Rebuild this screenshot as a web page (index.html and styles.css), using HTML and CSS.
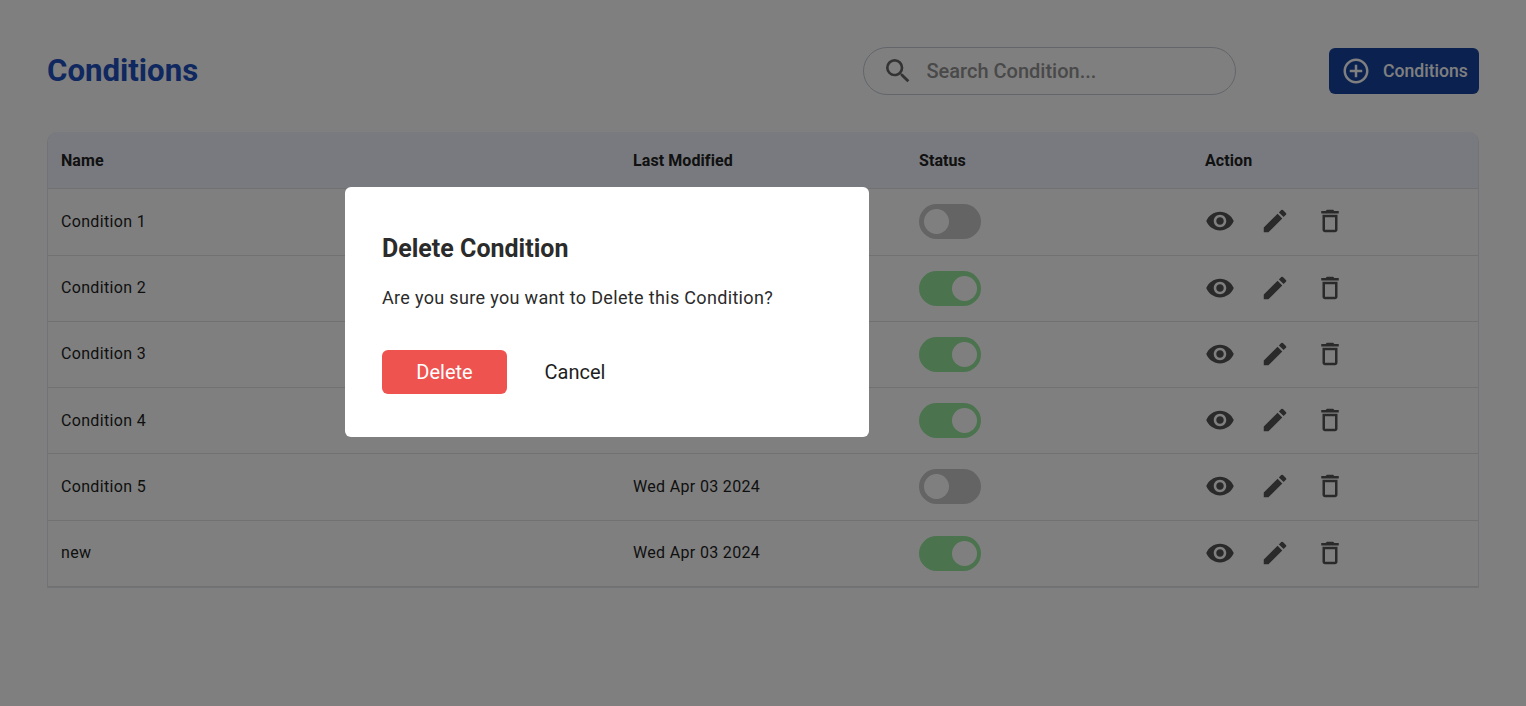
FILE: index.html
```html
<!DOCTYPE html>
<html lang="en">
<head>
<meta charset="utf-8">
<title>Conditions</title>
<link rel="stylesheet" href="styles.css">
</head>
<body>
<main class="page">
  <header class="topbar">
    <h1 class="title">Conditions</h1>
    <div class="tools">
      <label class="search">
        <svg class="search-icon" viewBox="0 0 24 24"><path d="M15.5 14h-.79l-.28-.27A6.471 6.471 0 0 0 16 9.5 6.5 6.5 0 1 0 9.5 16c1.61 0 3.09-.59 4.23-1.57l.27.28v.79l5 4.99L20.49 19l-4.99-5zm-6 0C7.01 14 5 11.99 5 9.5S7.01 5 9.5 5 14 7.01 14 9.5 11.99 14 9.5 14z"/></svg>
        <span class="search-text">Search Condition...</span>
      </label>
      <button class="add-btn" type="button">
        <svg class="add-icon" viewBox="0 0 24 24"><path d="M13 7h-2v4H7v2h4v4h2v-4h4v-2h-4V7zm-1-5C6.48 2 2 6.48 2 12s4.48 10 10 10 10-4.48 10-10S17.52 2 12 2zm0 18c-4.41 0-8-3.59-8-8s3.59-8 8-8 8 3.59 8 8-3.59 8-8 8z"/></svg>
        <span>Conditions</span>
      </button>
    </div>
  </header>

  <section class="table">
    <div class="row head"><div>Name</div><div>Last Modified</div><div>Status</div><div>Action</div></div>

    <div class="row"><div>Condition 1</div><div>Wed Apr 03 2024</div><div><span class="toggle"></span></div><div class="actions"><svg class="ic" viewBox="0 0 24 24"><path d="M12 4.5C7 4.5 2.73 7.61 1 12c1.73 4.39 6 7.5 11 7.5s9.27-3.11 11-7.5c-1.73-4.39-6-7.5-11-7.5zM12 17c-2.76 0-5-2.24-5-5s2.24-5 5-5 5 2.24 5 5-2.24 5-5 5zm0-8c-1.66 0-3 1.34-3 3s1.34 3 3 3 3-1.34 3-3-1.34-3-3-3z"/></svg><svg class="ic" viewBox="0 0 24 24"><path d="M3 17.25V21h3.75L17.81 9.94l-3.75-3.75L3 17.25zM20.71 7.04a.996.996 0 0 0 0-1.41l-2.34-2.34a.996.996 0 0 0-1.41 0l-1.83 1.83 3.75 3.75 1.83-1.83z"/></svg><svg class="ic" viewBox="0 0 24 24"><path d="M6 19c0 1.1.9 2 2 2h8c1.1 0 2-.9 2-2V7H6v12zM8 9h8v10H8V9zm7.5-5l-1-1h-5l-1 1H5v2h14V4h-3.5z"/></svg></div></div>

    <div class="row"><div>Condition 2</div><div>Wed Apr 03 2024</div><div><span class="toggle on"></span></div><div class="actions"><svg class="ic" viewBox="0 0 24 24"><path d="M12 4.5C7 4.5 2.73 7.61 1 12c1.73 4.39 6 7.5 11 7.5s9.27-3.11 11-7.5c-1.73-4.39-6-7.5-11-7.5zM12 17c-2.76 0-5-2.24-5-5s2.24-5 5-5 5 2.24 5 5-2.24 5-5 5zm0-8c-1.66 0-3 1.34-3 3s1.34 3 3 3 3-1.34 3-3-1.34-3-3-3z"/></svg><svg class="ic" viewBox="0 0 24 24"><path d="M3 17.25V21h3.75L17.81 9.94l-3.75-3.75L3 17.25zM20.71 7.04a.996.996 0 0 0 0-1.41l-2.34-2.34a.996.996 0 0 0-1.41 0l-1.83 1.83 3.75 3.75 1.83-1.83z"/></svg><svg class="ic" viewBox="0 0 24 24"><path d="M6 19c0 1.1.9 2 2 2h8c1.1 0 2-.9 2-2V7H6v12zM8 9h8v10H8V9zm7.5-5l-1-1h-5l-1 1H5v2h14V4h-3.5z"/></svg></div></div>

    <div class="row"><div>Condition 3</div><div>Wed Apr 03 2024</div><div><span class="toggle on"></span></div><div class="actions"><svg class="ic" viewBox="0 0 24 24"><path d="M12 4.5C7 4.5 2.73 7.61 1 12c1.73 4.39 6 7.5 11 7.5s9.27-3.11 11-7.5c-1.73-4.39-6-7.5-11-7.5zM12 17c-2.76 0-5-2.24-5-5s2.24-5 5-5 5 2.24 5 5-2.24 5-5 5zm0-8c-1.66 0-3 1.34-3 3s1.34 3 3 3 3-1.34 3-3-1.34-3-3-3z"/></svg><svg class="ic" viewBox="0 0 24 24"><path d="M3 17.25V21h3.75L17.81 9.94l-3.75-3.75L3 17.25zM20.71 7.04a.996.996 0 0 0 0-1.41l-2.34-2.34a.996.996 0 0 0-1.41 0l-1.83 1.83 3.75 3.75 1.83-1.83z"/></svg><svg class="ic" viewBox="0 0 24 24"><path d="M6 19c0 1.1.9 2 2 2h8c1.1 0 2-.9 2-2V7H6v12zM8 9h8v10H8V9zm7.5-5l-1-1h-5l-1 1H5v2h14V4h-3.5z"/></svg></div></div>

    <div class="row"><div>Condition 4</div><div>Wed Apr 03 2024</div><div><span class="toggle on"></span></div><div class="actions"><svg class="ic" viewBox="0 0 24 24"><path d="M12 4.5C7 4.5 2.73 7.61 1 12c1.73 4.39 6 7.5 11 7.5s9.27-3.11 11-7.5c-1.73-4.39-6-7.5-11-7.5zM12 17c-2.76 0-5-2.24-5-5s2.24-5 5-5 5 2.24 5 5-2.24 5-5 5zm0-8c-1.66 0-3 1.34-3 3s1.34 3 3 3 3-1.34 3-3-1.34-3-3-3z"/></svg><svg class="ic" viewBox="0 0 24 24"><path d="M3 17.25V21h3.75L17.81 9.94l-3.75-3.75L3 17.25zM20.71 7.04a.996.996 0 0 0 0-1.41l-2.34-2.34a.996.996 0 0 0-1.41 0l-1.83 1.83 3.75 3.75 1.83-1.83z"/></svg><svg class="ic" viewBox="0 0 24 24"><path d="M6 19c0 1.1.9 2 2 2h8c1.1 0 2-.9 2-2V7H6v12zM8 9h8v10H8V9zm7.5-5l-1-1h-5l-1 1H5v2h14V4h-3.5z"/></svg></div></div>

    <div class="row"><div>Condition 5</div><div>Wed Apr 03 2024</div><div><span class="toggle"></span></div><div class="actions"><svg class="ic" viewBox="0 0 24 24"><path d="M12 4.5C7 4.5 2.73 7.61 1 12c1.73 4.39 6 7.5 11 7.5s9.27-3.11 11-7.5c-1.73-4.39-6-7.5-11-7.5zM12 17c-2.76 0-5-2.24-5-5s2.24-5 5-5 5 2.24 5 5-2.24 5-5 5zm0-8c-1.66 0-3 1.34-3 3s1.34 3 3 3 3-1.34 3-3-1.34-3-3-3z"/></svg><svg class="ic" viewBox="0 0 24 24"><path d="M3 17.25V21h3.75L17.81 9.94l-3.75-3.75L3 17.25zM20.71 7.04a.996.996 0 0 0 0-1.41l-2.34-2.34a.996.996 0 0 0-1.41 0l-1.83 1.83 3.75 3.75 1.83-1.83z"/></svg><svg class="ic" viewBox="0 0 24 24"><path d="M6 19c0 1.1.9 2 2 2h8c1.1 0 2-.9 2-2V7H6v12zM8 9h8v10H8V9zm7.5-5l-1-1h-5l-1 1H5v2h14V4h-3.5z"/></svg></div></div>

    <div class="row"><div>new</div><div>Wed Apr 03 2024</div><div><span class="toggle on"></span></div><div class="actions"><svg class="ic" viewBox="0 0 24 24"><path d="M12 4.5C7 4.5 2.73 7.61 1 12c1.73 4.39 6 7.5 11 7.5s9.27-3.11 11-7.5c-1.73-4.39-6-7.5-11-7.5zM12 17c-2.76 0-5-2.24-5-5s2.24-5 5-5 5 2.24 5 5-2.24 5-5 5zm0-8c-1.66 0-3 1.34-3 3s1.34 3 3 3 3-1.34 3-3-1.34-3-3-3z"/></svg><svg class="ic" viewBox="0 0 24 24"><path d="M3 17.25V21h3.75L17.81 9.94l-3.75-3.75L3 17.25zM20.71 7.04a.996.996 0 0 0 0-1.41l-2.34-2.34a.996.996 0 0 0-1.41 0l-1.83 1.83 3.75 3.75 1.83-1.83z"/></svg><svg class="ic" viewBox="0 0 24 24"><path d="M6 19c0 1.1.9 2 2 2h8c1.1 0 2-.9 2-2V7H6v12zM8 9h8v10H8V9zm7.5-5l-1-1h-5l-1 1H5v2h14V4h-3.5z"/></svg></div></div>
  </section>
</main>

<div class="overlay">
  <div class="modal" role="dialog">
    <h2 class="modal-title">Delete Condition</h2>
    <p class="modal-text">Are you sure you want to Delete this Condition?</p>
    <div class="modal-actions">
      <button class="btn-delete" type="button">Delete</button>
      <button class="btn-cancel" type="button">Cancel</button>
    </div>
  </div>
</div>
</body>
</html>
```
FILE: styles.css
```css
* { box-sizing: border-box; }
html, body { height: 100%; }
body {
  margin: 0;
  background: #fff;
  font-family: Roboto, "Liberation Sans", sans-serif;
  color: #1a1a1a;
  overflow: hidden;
}
.page { padding: 47px 47px 0; }
.topbar {
  display: flex;
  align-items: center;
  justify-content: space-between;
  height: 48px;
  margin-bottom: 37px;
}
.title {
  margin: 0 0 1px;
  font-size: 31.2px;
  font-weight: 700;
  color: #1f50c0;
}
.tools { display: flex; align-items: center; gap: 93px; }
.search {
  display: flex;
  align-items: center;
  width: 373px;
  height: 48px;
  padding-left: 18px;
  gap: 12.5px;
  border: 1px solid #c4cad5;
  border-radius: 24px;
}
.search-icon { width: 32px; height: 32px; fill: #666; flex: none; }
.search-text { font-size: 20px; font-weight: 500; color: #939393; }
.add-btn {
  display: flex;
  align-items: center;
  gap: 12px;
  width: 150px;
  height: 46px;
  padding: 0 0 0 12px;
  border: 0;
  border-radius: 6px;
  background: #1642a0;
  color: #fff;
  font: 500 17.6px Roboto, sans-serif;
  white-space: nowrap;
}
.add-icon { width: 30px; height: 30px; fill: #fff; flex: none; }
.table {
  border: 1px solid #e4e6eb;
  border-top: 0;
  border-radius: 10px 10px 0 0;
  overflow: hidden;
}
.row {
  display: grid;
  grid-template-columns: 572px 286px 286px 1fr;
  align-items: center;
  height: 66.22px;
  padding-bottom: 1.2px;
  border-bottom: 1px solid #e2e2e2;
  font-size: 16px;
  color: #1e1e1e;
  letter-spacing: .33px;
}
.row > div { padding-left: 13px; }
.row.head {
  height: 57.45px;
  padding-bottom: 0;
  background: #f0f4fe;
  font-weight: 700;
  letter-spacing: .08px;
  color: #222;
}
.toggle {
  display: block;
  position: relative;
  width: 62px;
  height: 35px;
  margin-top: 1px;
  border-radius: 18px;
  background: #c8c8c8;
}
.toggle::after {
  content: "";
  position: absolute;
  top: 5px;
  left: 5px;
  width: 25px;
  height: 25px;
  border-radius: 50%;
  background: #fff;
}
.toggle.on { background: #96e89d; }
.toggle.on::after { left: 33px; }
.actions { display: flex; gap: 25px; align-items: center; }
.ic { width: 30px; height: 30px; fill: #555; flex: none; display: block; }
.overlay {
  position: fixed;
  inset: 0;
  background: rgba(0, 0, 0, .5);
}
.modal {
  position: absolute;
  left: 344.5px;
  top: 187px;
  width: 524.5px;
  height: 250px;
  padding: 48px 37.5px 0;
  background: #fff;
  border-radius: 6px;
}
.modal-title {
  margin: 0;
  font-size: 25px;
  line-height: 28px;
  font-weight: 700;
  color: #2b2b2b;
}
.modal-text {
  margin: 23px 0 0;
  font-size: 18px;
  line-height: 24px;
  letter-spacing: .33px;
  color: #2b2b2b;
}
.modal-actions { display: flex; align-items: center; gap: 37.5px; margin-top: 40px; }
.btn-delete {
  width: 125px;
  height: 44px;
  border: 0;
  border-radius: 6px;
  background: #ef5350;
  color: #fff;
  font: 400 20px Roboto, sans-serif;
}
.btn-cancel {
  border: 0;
  padding: 0;
  background: none;
  color: #1e1e1e;
  font: 400 20px Roboto, sans-serif;
}
```
